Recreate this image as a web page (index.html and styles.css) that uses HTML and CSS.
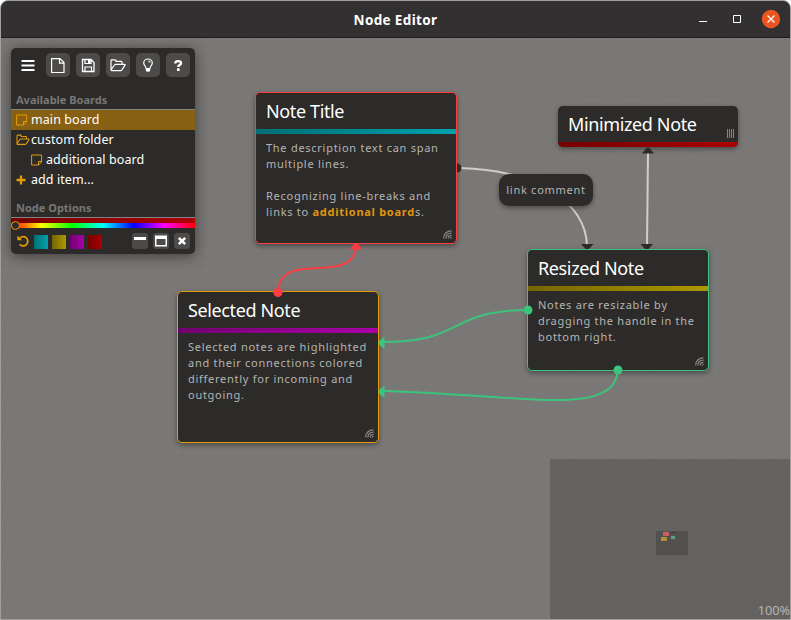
FILE: index.html
```html
<!DOCTYPE html>
<html lang="en">
<head>
<meta charset="utf-8">
<title>Node Editor</title>
<link rel="stylesheet" href="styles.css">
</head>
<body>
<svg class="defs" width="0" height="0">
  <symbol id="sticky" viewBox="0 0 12 12"><path d="M.6 1h10v7l-3 3h-7zM10.600 7.500H7.500V11" fill="none" stroke="currentColor"/></symbol>
  <symbol id="folder" viewBox="0 0 16 14"><path d="M1 11.500V2.200q0-.9.9-.9h3.200q.9 0 .9.9v.7h5.200q.9 0 .9.9v1.900M1 11.400L4.400 6.500q.4-.7 1.200-.7h8.900q1 0 .5.900l-2.900 4.500q-.5.900-1.300.900H1.700q-.7 0-.7-.8" fill="none" stroke="currentColor" stroke-width="1.200" stroke-linejoin="round"/></symbol>
  <symbol id="grip" viewBox="0 0 10 10"><path d="M.7 9.500C.7 4.500 4 1 9.500 1M3.200 9.500C3.200 6 5.500 3.500 9.500 3.500M5.700 9.500C5.700 7.500 7 6 9.500 6M8 9.500Q8 8.200 9.500 8.200" fill="none" stroke="currentColor" stroke-width="1.400"/></symbol>
</svg>
<div class="window">
  <header class="titlebar">
    <h1>Node Editor</h1>
    <div class="controls">
      <svg width="90" height="24" viewBox="0 0 90 24"><path d="M7 14.500h8" stroke="#fff"/><path d="M41.500 8.500h7v7h-7z" fill="none" stroke="#fff"/><circle cx="79" cy="12" r="9.200" fill="#e95420"/><path d="M75.500 8.500l7 7m0-7l-7 7" stroke="#fff" stroke-width="1.200"/></svg>
    </div>
  </header>
  <main class="canvas">
    <article class="note note-title">
      <h2>Note Title</h2><div class="bar teal"></div>
      <p>The description text can span<br>multiple lines.<br><br>Recognizing line-breaks and<br>links to <b>additional board</b>s.</p>
      <svg class="grip"><use href="#grip"/></svg>
    </article>
    <article class="note note-selected">
      <h2>Selected Note</h2><div class="bar purple"></div>
      <p>Selected notes are highlighted<br>and their connections colored<br>differently for incoming and<br>outgoing.</p>
      <svg class="grip"><use href="#grip"/></svg>
    </article>
    <article class="note note-min">
      <h2>Minimized Note</h2><div class="bar red"></div>
      <i class="lines"></i>
    </article>
    <article class="note note-resized">
      <h2>Resized Note</h2><div class="bar olive"></div>
      <p>Notes are resizable by<br>dragging the handle in the<br>bottom right.</p>
      <svg class="grip"><use href="#grip"/></svg>
    </article>
    <svg class="links" width="791" height="620" viewBox="0 0 791 620">
      <g fill="none" stroke-width="2">
        <g stroke="#cfcecc"><path d="M460 168C535 170 586 202 587 246"/><path d="M648 153L647 246"/></g>
        <path d="M278 292C280 248 352 287 356 247" stroke="#fc3c40"/>
        <g stroke="#3cc47c"><path d="M528 310C448 310 465 342 383 342"/><path d="M618 370C614 418 525 395 383 391"/></g>
      </g>
      <g fill="#2c2b29"><path d="M457 163.500a4.500 4.500 0 0 1 0 9z"/><path d="M642 153.500L646.500 148q1.500-1 3 0L654 153.500zM581 244h12.500l-4.500 5h-3.500zM640.500 244H653l-4.500 5H645z"/></g>
      <g fill="#fc3c40"><circle cx="278" cy="292.500" r="4.500"/><path d="M349.500 249.500l5-6h3l5 6z"/></g>
      <g fill="#3cc47c"><circle cx="528" cy="310" r="4.500"/><circle cx="618" cy="370" r="4.500"/><path d="M384.500 336.500v12.500l-6-5v-2.500zM384.500 385.500V398l-6-5v-2.500z"/></g>
    </svg>
    <div class="comment">link comment</div>
    <aside class="panel">
      <div class="tools">
        <span><svg viewBox="0 0 24 24"><path d="M5.500 8h13M5.500 12.500h13M5.500 17h13" stroke="#fff" stroke-width="2"/></svg></span>
        <button><svg viewBox="0 0 24 24"><path d="M5.600 5.600h8.400l4 4v9.900H5.600zM13.500 5.600v4.500H18" fill="none" stroke="#fff" stroke-width="1.200"/></svg></button>
        <button><svg viewBox="0 0 24 24"><path d="M6.500 6.500h8.500l3 3v9H6.500z" fill="none" stroke="#fff" stroke-width="1.300"/><path d="M9 6v4.500h6V6M9 18.500V14h6.500v4.500" fill="none" stroke="#fff" stroke-width="1.200"/><path d="M12 6h2.500v4H12z" fill="#fff"/></svg></button>
        <button><svg viewBox="0 0 24 24"><use href="#folder" x="4" y="5.500" width="16" height="14"/></svg></button>
        <button><svg viewBox="0 0 24 24"><path d="M10 15.500c0-2.500-2.300-3-2.300-5.500a4.300 4 0 0 1 8.600 0c0 2.500-2.300 3-2.300 5.500M12.300 8q1.700 0 1.700 1.500" fill="none" stroke="#fff" stroke-width="1.200"/><path d="M9.800 15h4.400v2.500q0 1.300-2.200 1.300t-2.200-1.300z" fill="#fff"/></svg></button>
        <button><svg viewBox="0 0 24 24"><path d="M9.200 10.500c.2-2 1.300-2.400 2.800-2.400 1.800 0 3 .8 3 2.100 0 2-2.700 1.800-2.700 3.800" fill="none" stroke="#fff" stroke-width="2.400"/><path d="M11 15.200h2.600V18H11z" fill="#fff"/></svg></button>
      </div>
      <h3 class="boards">Available Boards</h3>
      <ul>
        <li class="active"><svg class="sticky"><use href="#sticky"/></svg>main board</li>
        <li><svg class="folder"><use href="#folder"/></svg>custom folder</li>
        <li class="child"><svg class="sticky"><use href="#sticky"/></svg>additional board</li>
        <li><svg class="plus" viewBox="0 0 10 10"><path d="M5 .5v9M.5 5h9" stroke="currentColor" stroke-width="2.400"/></svg>add item...</li>
      </ul>
      <h3 class="options">Node Options</h3>
      <div class="shade"></div>
      <div class="hue"><i></i></div>
      <div class="actions">
        <svg class="undo" viewBox="0 0 12 12"><path d="M2.300 3.800A4.600 4.600 0 1 1 2.600 9.200" fill="none" stroke="currentColor" stroke-width="1.700"/><path d="M.3.500V5.300h4.900z" fill="currentColor"/></svg>
        <i class="swatch teal"></i><i class="swatch olive"></i><i class="swatch purple"></i><i class="swatch red"></i>
        <span class="space"></span>
        <button><svg viewBox="0 0 16 16"><path d="M2 4h12v3H2z" fill="#fff"/></svg></button>
        <button><svg viewBox="0 0 16 16"><path d="M2 2.500h12v11H2zM3.500 6v6h9V6z" fill="#fff" fill-rule="evenodd"/></svg></button>
        <button><svg viewBox="0 0 16 16"><path d="M4.800 4.800l6.400 6.400m0-6.400l-6.400 6.400" stroke="#fff" stroke-width="2.500"/></svg></button>
      </div>
    </aside>
    <div class="minimap">
      <div class="view"><i class="m1"></i><i class="m2"></i><i class="m3"></i><i class="m4"></i></div>
      <span class="zoom">100%</span>
    </div>
  </main>
</div>
</body>
</html>
```
FILE: styles.css
```css
* { box-sizing: border-box; }
body { margin: 0; background: #fff; font-family: "Noto Sans", sans-serif; color: #fff; overflow: hidden; }
h1, h2, h3, p, ul { margin: 0; padding: 0; }
.defs { position: absolute; }
.window { position: relative; width: 791px; height: 620px; border: 1px solid #a09f9d; border-radius: 8px 8px 0 0; overflow: hidden; background: #7a7876; display: flex; flex-direction: column; }
.titlebar { height: 37px; flex: none; background: #323031; border-bottom: 1px solid #1d1b1b; display: grid; grid-template-columns: 1fr auto 1fr; align-items: center; }
.titlebar h1 { grid-column: 2; font-size: 13.500px; letter-spacing: .35px; font-weight: 700; line-height: 20px; margin-top: 2px; }
.controls { justify-self: end; height: 24px; padding-right: 9px; }
.controls svg { display: block; margin-right: 0; margin-right: -1px; }
.canvas { flex: 1; background: radial-gradient(circle at 5px 5px, #7d7b79 0 1px, transparent 2px) 1px 8px / 10px 10px, #7a7876; }
.links { position: absolute; left: -1px; top: -1px; }

.note { position: absolute; display: flex; flex-direction: column; background: #2c2b29; border-radius: 5px; box-shadow: 0 2px 5px rgba(0,0,0,.4); border: 1px solid; }
.note h2 { font-size: 18px; letter-spacing: -.37px; line-height: 36px; height: 36px; font-weight: 400; padding-left: 10px; white-space: nowrap; color: #fff; }
.note p { padding: 6px 10px; font-size: 11px; letter-spacing: .73px; line-height: 16px; color: #b5b4b2; white-space: nowrap; }
.note b { color: #e09410; }
.bar { height: 5px; flex: none; }
.note-title { left: 254px; top: 91px; width: 202px; height: 152px; border-color: #fc3c40; }
.note-selected { left: 176px; top: 290px; width: 202px; height: 152px; border-color: #e49b08; }
.note-resized { left: 526px; top: 248px; width: 182px; height: 122px; border-color: #3cc47c; }
.note-min { left: 557px; top: 105px; width: 180px; height: 41px; border: 0; }
.note-min .bar { border-radius: 0 0 5px 5px; }
.teal { background: linear-gradient(90deg, #006f75, #00a2ad); }
.purple { background: linear-gradient(90deg, #720070, #aa00a8); }
.olive { background: linear-gradient(90deg, #756500, #ad9800); }
.red { background: linear-gradient(90deg, #750000, #ad0000); }
.grip { position: absolute; right: 4px; bottom: 4px; width: 9px; height: 9px; color: #858482; }
.lines { position: absolute; right: 4px; top: 23px; width: 7px; height: 9px; background: repeating-linear-gradient(90deg, #858482 0 1px, transparent 1px 2px); }
.comment { position: absolute; left: 498px; top: 173px; width: 94px; height: 32px; border-radius: 10px; background: #2c2b29; color: #b5b4b2; font-size: 11px; line-height: 32px; letter-spacing: .73px; text-align: center; box-shadow: 0 2px 5px rgba(0,0,0,.4); }

.panel { position: absolute; left: 10px; top: 47px; width: 184px; height: 206px; border-radius: 5px; background: #2c2b29; box-shadow: 0 2px 14px rgba(0,0,0,.5); }
.tools { display: flex; gap: 6px; padding: 5px; }
.tools span, .tools button { width: 24px; height: 24px; }
.tools svg, .actions button svg { display: block; width: 100%; height: 100%; }
button { border: 0; padding: 0; border-radius: 5px; background: #4c4b49; color: #fff; }
h3 { font-size: 11px; line-height: 16px; color: #787775; padding-left: 5px; border-bottom: 1px solid #858482; }
.boards { margin-top: 10px; height: 18px; }
ul { list-style: none; }
li { display: flex; align-items: center; height: 20px; padding-left: 5px; font-size: 12.500px; letter-spacing: .08px; line-height: 20px; white-space: nowrap; }
li svg { color: #e49b08; width: 12px; height: 12px; margin-right: 3px; }
li .folder { width: 14px; margin-right: 1px; }
li .plus { width: 10px; height: 10px; margin-right: 5px; }
.active { background: #886013; }
.child { padding-left: 20px; }
.options { margin-top: 10px; height: 18px; }
.shade { height: 5px; background: linear-gradient(90deg, #750000, #ad0000); }
.hue { position: relative; height: 5px; background: linear-gradient(90deg, red, yellow, lime, cyan, blue, magenta, red); }
.hue i { position: absolute; left: 0; top: -2px; width: 9px; height: 9px; border: 1px solid #e49b08; border-radius: 50%; background: #2c2b29; }
.actions { display: flex; align-items: flex-start; padding: 5px 5px 0; }
.undo { width: 12px; height: 12px; margin: 2px 6px 0 1px; color: #e49b08; }
.swatch { width: 14px; height: 14px; margin: 2px 4px 0 0; }
.undo + .swatch { margin-left: -1px; }
.space { flex: 1; }
.actions button { width: 16px; height: 16px; margin-left: 5px; border-radius: 3px; }

.minimap { position: absolute; left: 549px; top: 458px; width: 240px; height: 160px; background: rgba(44,43,41,.28); }
.view { position: absolute; left: 106px; top: 72px; width: 32px; height: 24px; background: rgba(44,43,41,.32); }
.view i { position: absolute; height: 4px; width: 6px; }
.m1 { left: 7px; top: 1px; background: #c95f60; }
.m2 { left: 5px; top: 6px; background: #b58c3b; }
.view .m3 { left: 15px; top: 5px; width: 4px; height: 3px; background: #56a67b; }
.view .m4 { left: 15px; top: 1px; width: 5px; height: 1px; background: #3a3937; }
.zoom { position: absolute; right: 0; bottom: 0; font-size: 12.700px; line-height: 17px; color: #b5b4b2; }
```
